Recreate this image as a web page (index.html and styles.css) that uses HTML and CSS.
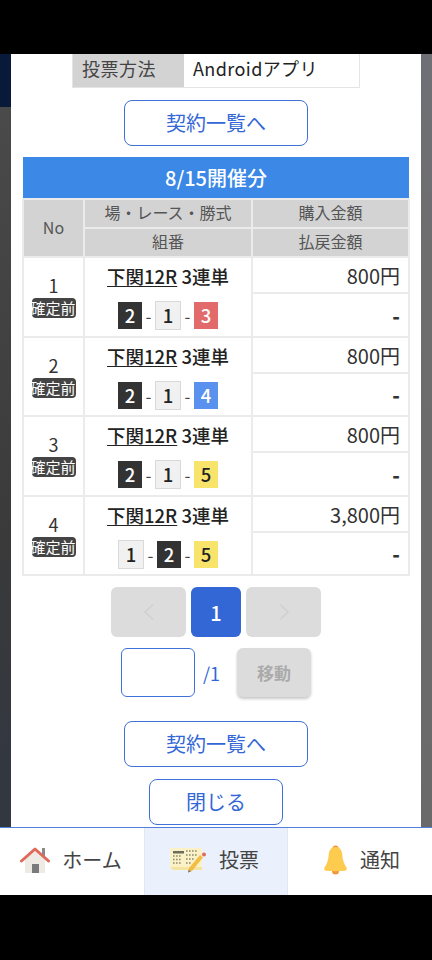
FILE: index.html
```html
<!DOCTYPE html>
<html lang="ja">
<head>
<meta charset="utf-8">
<title>契約一覧</title>
<link rel="stylesheet" href="styles.css">
</head>
<body>
<div class="screen">
  <div class="status"></div>
  <div class="stage">
    <div class="side side-left"><div class="band-navy"></div><div class="band-dark"></div></div>
    <main class="modal">
      <div class="method">
        <div class="method-label">投票方法</div>
        <div class="method-value">Androidアプリ</div>
      </div>
      <a class="outline-btn wide">契約一覧へ</a>
      <h2 class="day-title">8/15開催分</h2>
      <table class="bets">
        <colgroup><col class="c1"><col class="c2"><col class="c3"></colgroup>
        <thead>
          <tr><th rowspan="2" class="th-no">No</th><th>場・レース・勝式</th><th>購入金額</th></tr>
          <tr><th>組番</th><th>払戻金額</th></tr>
        </thead>
        <tbody>
          <tr>
            <td rowspan="2" class="no"><div class="no-num">1</div><span class="status-tag">確定前</span></td>
            <td rowspan="2" class="race">
              <div class="race-name"><u>下関12R</u> 3連単</div>
              <div class="combo"><b class="n n-black">2</b><i>-</i><b class="n n-white">1</b><i>-</i><b class="n n-red">3</b></div>
            </td>
            <td class="amt buy">800円</td>
          </tr>
          <tr><td class="amt pay">-</td></tr>
          <tr>
            <td rowspan="2" class="no"><div class="no-num">2</div><span class="status-tag">確定前</span></td>
            <td rowspan="2" class="race">
              <div class="race-name"><u>下関12R</u> 3連単</div>
              <div class="combo"><b class="n n-black">2</b><i>-</i><b class="n n-white">1</b><i>-</i><b class="n n-blue">4</b></div>
            </td>
            <td class="amt buy">800円</td>
          </tr>
          <tr><td class="amt pay">-</td></tr>
          <tr>
            <td rowspan="2" class="no"><div class="no-num">3</div><span class="status-tag">確定前</span></td>
            <td rowspan="2" class="race">
              <div class="race-name"><u>下関12R</u> 3連単</div>
              <div class="combo"><b class="n n-black">2</b><i>-</i><b class="n n-white">1</b><i>-</i><b class="n n-yellow">5</b></div>
            </td>
            <td class="amt buy">800円</td>
          </tr>
          <tr><td class="amt pay">-</td></tr>
          <tr>
            <td rowspan="2" class="no"><div class="no-num">4</div><span class="status-tag">確定前</span></td>
            <td rowspan="2" class="race">
              <div class="race-name"><u>下関12R</u> 3連単</div>
              <div class="combo"><b class="n n-white">1</b><i>-</i><b class="n n-black">2</b><i>-</i><b class="n n-yellow">5</b></div>
            </td>
            <td class="amt buy">3,800円</td>
          </tr>
          <tr><td class="amt pay">-</td></tr>
        </tbody>
      </table>
      <div class="pager">
        <span class="page-arrow"><svg width="12" height="18" viewBox="0 0 12 18"><path d="M10 1.500 2 9l8 7.500" fill="none" stroke="#d0d0d0" stroke-width="1.500"/></svg></span>
        <span class="page-current">1</span>
        <span class="page-arrow"><svg width="12" height="18" viewBox="0 0 12 18"><path d="M2 1.500 10 9l-8 7.500" fill="none" stroke="#d0d0d0" stroke-width="1.500"/></svg></span>
      </div>
      <div class="jump">
        <input class="jump-input" type="text" aria-label="ページ">
        <span class="jump-total">/1</span>
        <span class="jump-btn">移動</span>
      </div>
      <a class="outline-btn wide second">契約一覧へ</a>
      <a class="outline-btn narrow">閉じる</a>
    </main>
    <div class="side side-right"></div>
  </div>
  <nav class="tabs">
    <a class="tab tab-home">
      <svg class="home-icon" width="30" height="28" viewBox="0 0 30 28">
        <path d="M22 2h3v9h-3z" fill="#8a8a8a"/>
        <path d="M5 13 15 4l10 9v14H5z" fill="#eeebe4"/>
        <path d="M12 18h7v9h-7z" fill="#7b7b7b"/>
        <path d="M1.500 15 15 3 28.500 15" fill="none" stroke="#e0695c" stroke-width="3" stroke-linecap="round" stroke-linejoin="round"/>
      </svg>
      <span>ホーム</span>
    </a>
    <a class="tab tab-vote active">
      <svg class="vote-icon" width="38" height="26" viewBox="0 0 38 26">
        <path d="M1 2h32v21H4l-3-3z" fill="#f5e3a0"/>
        <path d="M1 1h32v19H1z" fill="#faf1c6"/>
        <path d="M4 4h11v2.500H4z" fill="#6b6b5e"/>
        <path d="M4 9h9M4 12.500h9M4 16h9M17 4h12M17 8h12M17 12h8M17 16h5" stroke="#8d8a70" stroke-width="1.600" stroke-dasharray="1.600 1.400" fill="none"/>
        <path d="M20 21 31 8l3 2.500L23 24l-4 1.500z" fill="#f3bd45"/>
        <path d="M19 25.500l.7-3 2.300 2z" fill="#7a7a7a"/>
        <circle cx="35" cy="7.500" r="2" fill="#e0695c"/>
      </svg>
      <span>投票</span>
    </a>
    <a class="tab tab-notice">
      <svg class="bell-icon" width="25" height="30" viewBox="0 0 24 30">
        <circle cx="12" cy="3.500" r="3" fill="#f0963c"/>
        <path d="M8.500 26h7a3.500 3.500 0 0 1-7 0z" fill="#f0963c"/>
        <path d="M12 2c4.500 0 6.500 3.500 6.800 8 .3 5 1.700 9 4.200 12.500.8 1.300.2 3-1.500 3.200-6.500.6-12.500.6-19 0C.8 25.500.2 23.800 1 22.500 3.500 19 4.900 15 5.200 10 5.500 5.500 7.500 2 12 2z" fill="#fdcb4d"/>
      </svg>
      <span>通知</span>
    </a>
  </nav>
  <div class="bottom-bar"></div>
</div>
</body>
</html>
```

FILE: styles.css
```css
* { box-sizing: border-box; }
html, body { margin: 0; padding: 0; }
body {
  font-family: "Noto Sans CJK JP", "Noto Sans", sans-serif;
  color: #333;
  background: #000;
}
.screen { width: 432px; height: 960px; display: flex; flex-direction: column; overflow: hidden; }
.status { height: 54px; background: #000; flex: none; }
.bottom-bar { height: 65px; background: #000; flex: none; }

.stage { height: 773px; flex: none; display: flex; overflow: hidden; }
.side { width: 11px; flex: none; }
.side-left { display: flex; flex-direction: column; background: #3a3a3a; }
.band-navy { height: 53px; background: #08193a; }
.band-dark { flex: 1; background: linear-gradient(#4a4a4a, #3a3a3a 60%, #333740 90%); }
.side-right { background: linear-gradient(#6f7076, #6d6d6d 30%, #6a6a6a); }

.modal { width: 410px; flex: none; background: #fff; padding: 0 12px; display: flex; flex-direction: column; align-items: center; }

.method { width: 288px; height: 34px; flex: none; display: flex; border: 1px solid #e4e4e4; border-top: 0; font-size: 18px; line-height: 29px; }
.method-label { width: 111px; background: #d3d3d3; padding-left: 9px; color: #444; letter-spacing: .5px; }
.method-value { flex: 1; padding-left: 9px; color: #222; letter-spacing: .4px; }

.outline-btn { display: flex; align-items: center; justify-content: center; flex: none; background: #fff; border: 1.500px solid #3e72d8; border-radius: 8px; color: #3367d6; font-size: 20px; padding-bottom: 1px; }
.wide { width: 184px; height: 46px; margin-top: 12px; }
.second { margin-top: 24px; }
.narrow { width: 134px; height: 46px; margin-top: 12px; }

.day-title { width: 386px; height: 41px; flex: none; margin: 11px 0 0; background: #3b88e6; color: #fff; font-size: 20px; font-weight: 500; line-height: 41px; text-align: center; }

.bets { width: 386px; flex: none; border-collapse: collapse; table-layout: fixed; }
.c1 { width: 61px; }
.c2 { width: 168px; }
.c3 { width: 157px; }
.bets th, .bets td { border: 2px solid #ebebeb; padding: 0; }
.bets th { background: #d3d3d3; font-weight: 400; font-size: 16px; color: #555; height: 29px; line-height: 20px; padding-bottom: 4px; }
.bets th.th-no { padding-bottom: 2px; }
.bets td.buy { height: 36px; padding: 2px 8px 0 0; }
.bets td.pay { height: 43.500px; padding: 2px 8px 0 0; }
.bets td.no { vertical-align: top; text-align: center; font-size: 18px; line-height: 22px; color: #333; }
.no-num { margin-top: 16px; }
.status-tag { display: block; width: 44px; height: 20px; margin: 2px auto 0; background: #444; border-radius: 4px; color: #fff; font-size: 15px; line-height: 20px; text-indent: -1px; white-space: nowrap; overflow: hidden; }
.bets td.race { vertical-align: top; text-align: center; }
.race-name { margin-top: 6px; font-size: 18.500px; font-weight: 500; line-height: 24px; color: #222; }
.race-name u { text-underline-offset: 2px; }
.combo { display: flex; justify-content: center; align-items: center; gap: 2.500px; margin-top: 13px; }
.combo i { font-style: normal; font-size: 17px; color: #444; width: 8px; }
.n { display: block; font-size: 18.500px; font-weight: 500; font-style: normal; width: 24px; height: 27px; line-height: 27px; text-align: center; }
.n-black { background: #333; color: #fff; }
.n-white { background: #f1f1f1; color: #222; border: 1px solid #d9d9d9; height: 29px; width: 26px; }
.n-red { background: #e36a6a; color: #fff; }
.n-blue { background: #5a91ee; color: #fff; }
.n-yellow { background: #f8e46a; color: #222; }
.amt { text-align: right; color: #333; line-height: 24px; font-size: 20px; }
.pay { font-weight: 900; }

.pager { display: flex; gap: 5px; margin-top: 11px; flex: none; }
.page-arrow { width: 75px; height: 50px; background: #dcdcdc; border-radius: 6px; display: flex; align-items: center; justify-content: center; }
.page-current { width: 50px; height: 50px; background: #3367d6; color: #fff; border-radius: 6px; font-size: 20px; font-weight: 500; display: flex; align-items: center; justify-content: center; }
.jump { display: flex; align-items: center; margin-top: 11px; flex: none; width: 190px; }
.jump-input { width: 74px; height: 49px; background: #fff; border: 1.500px solid #3e72d8; border-radius: 6px; padding: 0; }
.jump-total { width: 42px; padding-left: 8px; font-size: 18px; color: #3367d6; }
.jump-btn { width: 74px; height: 49px; background: #dcdcdc; border-radius: 6px; box-shadow: 0 2px 3px rgba(0,0,0,.22); color: #aaa; font-size: 17px; font-weight: 700; display: flex; align-items: center; justify-content: center; }

.tabs { height: 68px; flex: none; display: flex; background: #fff; border-top: 1.500px solid #4f7fdc; }
.tab { flex: 0 0 144px; display: flex; align-items: center; justify-content: center; gap: 12px; font-size: 20px; color: #444; padding-bottom: 4px; }
.tab-home { padding-right: 2px; }
.tab-vote { padding-right: 4px; }
.tab-notice { padding-left: 3px; gap: 12px; }
.tab.active { background: #eaf1fc; border-left: 1px solid #e2e6ee; border-right: 1px solid #e2e6ee; }
```
